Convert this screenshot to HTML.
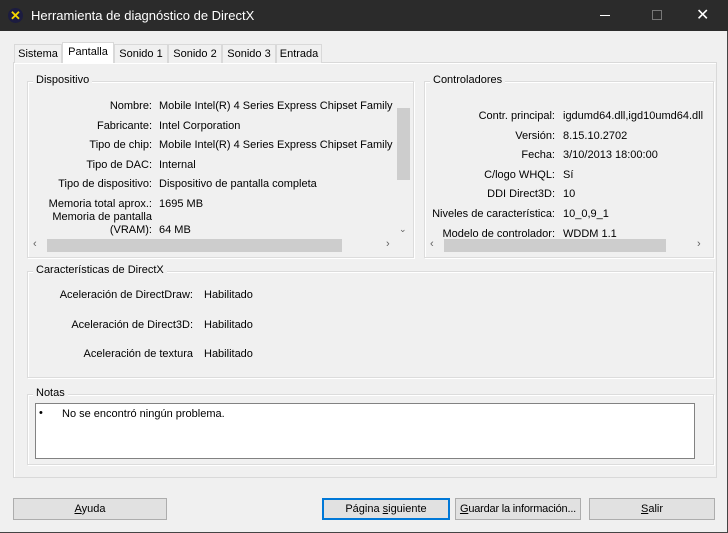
<!DOCTYPE html>
<html><head><meta charset="utf-8"><style>
*{margin:0;padding:0;box-sizing:border-box}
body{width:728px;height:533px;background:#f0f0f0;font-family:"Liberation Sans",sans-serif;font-size:11px;color:#000;position:relative;overflow:hidden;white-space:nowrap}
.a{position:absolute}
.title{left:0;top:0;width:728px;height:31px;background:#2b2b2b;color:#fff;font-size:13px}
.tab{top:44px;height:19px;border:1px solid #d9d9d9;border-bottom:none;background:#f0f0f0;padding:3px 0;text-align:center;font-size:11px}
.grp{border:1px solid #dcdcdc;box-shadow:inset 1px 1px 0 #fff,1px 1px 0 #fff}
.lg{background:#f0f0f0;padding:0 3px;top:-8px;left:5px}
.r{text-align:right}
.btn{top:498px;height:22px;border:1px solid #adadad;background:#e1e1e1;text-align:center;line-height:20px}
.sb{background:#f0f0f0}
</style></head><body>
<div class="a title">
<div class="a" style="left:8px;top:8px;width:15px;height:15px;border-radius:50%;background:#1c1c40;color:#f4d400;font-weight:bold;font-size:13px;line-height:15px;text-align:center">✕</div>
<div class="a" style="left:31px;top:8px">Herramienta de diagnóstico de DirectX</div>
<div class="a" style="left:600px;top:15px;width:10px;height:1px;background:#fff"></div>
<div class="a" style="left:652px;top:10px;width:10px;height:10px;border:1px solid #777"></div>
<div class="a" style="left:696px;top:5px;font-size:16px;color:#fff">✕</div>
</div>
<div class="a" style="left:727px;top:31px;width:1px;height:502px;background:#444"></div>
<div class="a" style="left:0;top:532px;width:728px;height:1px;background:#444"></div>

<div class="a" style="left:13px;top:62px;width:704px;height:416px;border:1px solid #d9d9d9;background:#f0f0f0;box-shadow:inset 1px 1px 0 #fff"></div>
<div class="a tab" style="left:14px;width:48px">Sistema</div>
<div class="a tab" style="left:62px;width:52px;top:42px;height:21px;background:#fff">Pantalla</div>
<div class="a tab" style="left:114px;width:54px">Sonido 1</div>
<div class="a tab" style="left:168px;width:54px">Sonido 2</div>
<div class="a tab" style="left:222px;width:54px">Sonido 3</div>
<div class="a tab" style="left:276px;width:46px">Entrada</div>

<div class="a grp" style="left:27px;top:81px;width:387px;height:177px"><div class="a lg">Dispositivo</div></div>
<div class="a" style="left:30px;top:90px;width:381px;height:163px;overflow:hidden">
<div class="a r" style="left:0;top:7px;width:122px;line-height:19.6px">Nombre:<br>Fabricante:<br>Tipo de chip:<br>Tipo de DAC:<br>Tipo de dispositivo:<br>Memoria total aprox.:</div>
<div class="a r" style="left:0;top:121px;width:122px;line-height:13px">Memoria de pantalla<br>(VRAM):</div>
<div class="a" style="left:129px;top:7px;width:237px;overflow:hidden;line-height:19.6px">Mobile Intel(R) 4 Series Express Chipset Family (M<br>Intel Corporation<br>Mobile Intel(R) 4 Series Express Chipset Family<br>Internal<br>Dispositivo de pantalla completa<br>1695 MB</div>
<div class="a" style="left:129px;top:134px">64 MB</div>
<div class="a sb" style="left:366px;top:0;width:15px;height:148px"><div class="a" style="left:1px;top:18px;width:13px;height:72px;background:#cdcdcd"></div><div class="a" style="left:3px;top:134px;color:#606060;font-size:9px">⌄</div></div>
<div class="a sb" style="left:0;top:148px;width:381px;height:15px"><div class="a" style="left:3px;top:0;color:#606060">‹</div><div class="a" style="left:17px;top:1px;width:295px;height:13px;background:#cdcdcd"></div><div class="a" style="left:356px;top:0;color:#606060">›</div></div>
</div>

<div class="a grp" style="left:424px;top:81px;width:290px;height:177px"><div class="a lg">Controladores</div></div>
<div class="a" style="left:427px;top:90px;width:285px;height:163px;overflow:hidden">
<div class="a r" style="left:0;top:17px;width:128px;line-height:19.6px">Contr. principal:<br>Versión:<br>Fecha:<br>C/logo WHQL:<br>DDI Direct3D:<br>Niveles de característica:<br>Modelo de controlador:</div>
<div class="a" style="left:136px;top:17px;line-height:19.6px">igdumd64.dll,igd10umd64.dll<br>8.15.10.2702<br>3/10/2013 18:00:00<br>Sí<br>10<br>10_0,9_1<br>WDDM 1.1</div>
<div class="a sb" style="left:0;top:148px;width:285px;height:15px"><div class="a" style="left:3px;top:0;color:#606060">‹</div><div class="a" style="left:17px;top:1px;width:222px;height:13px;background:#cdcdcd"></div><div class="a" style="left:270px;top:0;color:#606060">›</div></div>
</div>

<div class="a grp" style="left:27px;top:271px;width:687px;height:107px"><div class="a lg">Características de DirectX</div></div>
<div class="a r" style="left:30px;top:281px;width:163px;line-height:29.5px">Aceleración de DirectDraw:<br>Aceleración de Direct3D:<br>Aceleración de textura</div>
<div class="a" style="left:204px;top:281px;line-height:29.5px">Habilitado<br>Habilitado<br>Habilitado</div>

<div class="a grp" style="left:27px;top:394px;width:687px;height:71px"><div class="a lg">Notas</div></div>
<div class="a" style="left:35px;top:403px;width:660px;height:56px;background:#fff;border:1px solid #828282">
<div class="a" style="left:3px;top:3px">•</div><div class="a" style="left:26px;top:4px">No se encontró ningún problema.</div></div>

<div class="a btn" style="left:13px;width:154px"><u>A</u>yuda</div>
<div class="a btn" style="left:322px;width:128px;border:1px solid #0078d7;box-shadow:inset 0 0 0 1px #0078d7">Página <u>s</u>iguiente</div>
<div class="a btn" style="left:455px;width:126px;letter-spacing:-0.2px"><u>G</u>uardar la información...</div>
<div class="a btn" style="left:589px;width:126px"><u>S</u>alir</div>
</body></html>
